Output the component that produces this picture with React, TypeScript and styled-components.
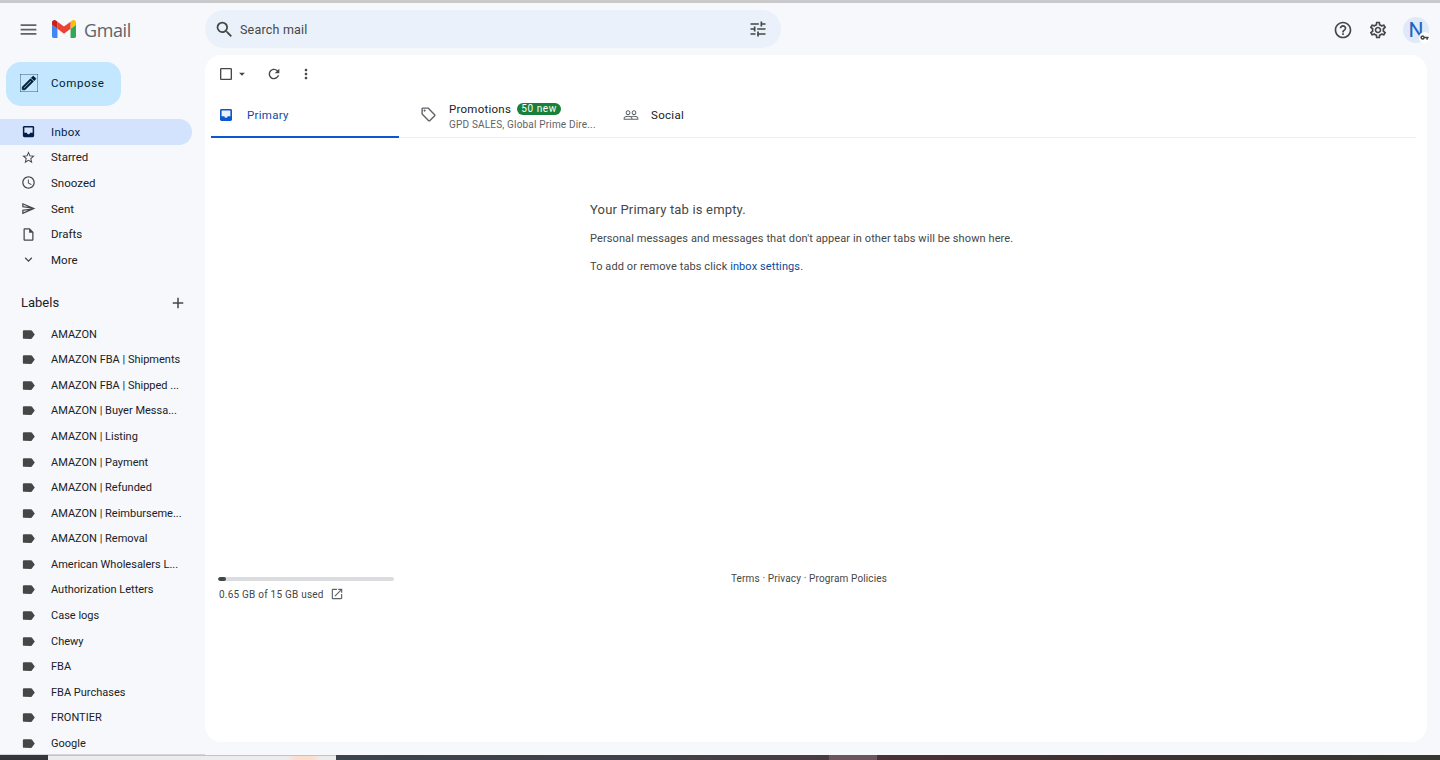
import React from "react";
import styled, { createGlobalStyle } from "styled-components";
import {
  MdMenu, MdSearch, MdTune, MdHelpOutline, MdOutlineSettings, MdOutlineEdit, MdOutlineStarBorder,
  MdAccessTime, MdOutlineSend, MdOutlineInsertDriveFile, MdExpandMore, MdLabel, MdAdd,
  MdCheckBoxOutlineBlank, MdArrowDropDown, MdRefresh, MdMoreVert, MdOutlineLocalOffer,
  MdPeopleOutline, MdOpenInNew, MdVpnKey,
} from "react-icons/md";

const Global = createGlobalStyle`
  html, body { margin: 0; height: 100%; overflow: hidden; }
  body { font-family: Roboto, "Liberation Sans", sans-serif; background: #f6f8fc; color: #202124; }
  #root { height: 100%; }
  * { box-sizing: border-box; }
`;

const Page = styled.div`
  height: 760px;
  display: flex;
  flex-direction: column;
  background: #f6f8fc;
`;
const TopEdge = styled.div`
  height: 3px;
  flex: none;
  background: #c9c9cb;
`;
const Shell = styled.div`
  flex: 1;
  min-height: 0;
  display: grid;
  grid-template-columns: 205px 1fr;
  overflow: hidden;
`;
const Taskbar = styled.div`
  height: 5px;
  flex: none;
  display: grid;
  grid-template-columns: 48px 288px 493px 48px 1fr;
`;
const TaskSegment = styled.div<{ $bg: string; $edge?: boolean }>`
  background: ${(p) => p.$bg};
  border-top: ${(p) => (p.$edge ? "1px solid #c4c4c4" : "none")};
`;

const Sidebar = styled.aside`
  display: flex;
  flex-direction: column;
  min-height: 0;
  overflow: hidden;
  border-bottom: 1px solid #d4d6da;
`;
const Brand = styled.div`
  height: 52px;
  flex: none;
  display: flex;
  align-items: center;
  padding-left: 18px;
  color: #5f6368;
`;
const BrandMark = styled.svg`
  width: 24px;
  height: 18px;
  margin-left: 13px;
`;
const BrandName = styled.span`
  font-family: "Open Sans", sans-serif;
  font-size: 18px;
  margin: 2px 0 0 8px;
  letter-spacing: -0.4px;
  color: #5f6368;
`;
const Compose = styled.div`
  width: 115px;
  height: 44px;
  flex: none;
  margin: 7px 0 13px 6px;
  border-radius: 15px;
  background: #c2e7ff;
  display: flex;
  align-items: center;
  padding: 0 0 2px 14px;
  gap: 13px;
  font-size: 11.5px;
  letter-spacing: 0.6px;
  color: #001d35;
  font-weight: 400;
  svg { stroke: currentColor; stroke-width: 0.9; }
`;
const NavRow = styled.div<{ $active?: boolean }>`
  height: 25.6px;
  flex: none;
  width: 192px;
  display: flex;
  align-items: center;
  padding-left: 21px;
  gap: 15px;
  font-size: 11.5px;
  white-space: nowrap;
  border-radius: 0 13px 13px 0;
  color: ${(p) => (p.$active ? "#041e49" : "#202124")};
  background: ${(p) => (p.$active ? "#d3e3fd" : "transparent")};
  font-weight: 400;
  letter-spacing: ${(p) => (p.$active ? "0.3px" : "0.02px")};
  svg { flex: none; color: ${(p) => (p.$active ? "#041e49" : "#444746")}; }
`;
const LabelRow = styled(NavRow)`
  font-size: 11px;
  letter-spacing: 0;
`;
const LabelHead = styled.div`
  height: 26px;
  flex: none;
  margin: 17px 0 5.7px;
  width: 192px;
  padding: 0 5px 0 21px;
  display: flex;
  align-items: center;
  justify-content: space-between;
  font-size: 13px;
  font-weight: 400;
  color: #202124;
  svg { color: #444746; }
`;
const Main = styled.main`
  display: flex;
  flex-direction: column;
  min-width: 0;
`;
const Header = styled.header`
  height: 52px;
  flex: none;
  display: flex;
  align-items: center;
`;
const Search = styled.div`
  width: 576px;
  height: 38px;
  border-radius: 19px;
  background: #eaf1fb;
  display: flex;
  align-items: center;
  padding: 0 13px 0 9px;
  font-size: 12.5px;
  color: #444746;
  gap: 5px;
  svg { color: #444746; flex: none; }
`;
const SearchText = styled.span`
  flex: 1;
  letter-spacing: 0.2px;
`;
const HeaderTools = styled.div`
  margin-left: auto;
  margin-right: 11px;
  padding-top: 2px;
  display: flex;
  align-items: center;
  gap: 15px;
  color: #444746;
`;
const Avatar = styled.div`
  position: relative;
  width: 26px;
  height: 26px;
  border-radius: 50%;
  background: #dfe9f8;
  display: flex;
  align-items: center;
  justify-content: center;
  font-size: 21px;
  color: #1a66c2;
`;
const KeyBadge = styled.span`
  position: absolute;
  right: -1px;
  bottom: 0;
  width: 11px;
  height: 11px;
  border-radius: 50%;
  background: #fff;
  display: flex;
  align-items: center;
  justify-content: center;
  color: #444;
`;
const Panel = styled.section`
  width: 1222px;
  height: 687px;
  background: #fff;
  border-radius: 16px;
  display: flex;
  flex-direction: column;
  padding: 0 11px 0 6px;
`;
const Toolbar = styled.div`
  height: 38px;
  flex: none;
  display: flex;
  align-items: center;
  padding-left: 7px;
  color: #444746;
`;
const CaretSlot = styled.span`
  display: flex;
  margin-left: 1px;
`;
const ToolGap = styled.span<{ $w: number }>`
  width: ${(p) => p.$w}px;
`;
const Tabs = styled.div`
  height: 45px;
  flex: none;
  display: flex;
  border-bottom: 1px solid #eceff1;
`;
const Tab = styled.div<{ $active?: boolean; $w: number; $pad: number; $gap: number }>`
  width: ${(p) => p.$w}px;
  flex: none;
  display: flex;
  align-items: center;
  gap: ${(p) => p.$gap}px;
  padding-left: ${(p) => p.$pad}px;
  font-size: 11.5px;
  letter-spacing: 0.3px;
  margin-bottom: -1px;
  color: ${(p) => (p.$active ? "#0b4aa8" : "#202124")};
  border-bottom: 2px solid ${(p) => (p.$active ? "#0b57d0" : "transparent")};
  svg { color: ${(p) => (p.$active ? "#0b57d0" : "#5f6368")}; flex: none; }
`;
const TabStack = styled.div`
  display: flex;
  flex-direction: column;
  gap: 3px;
  padding-top: 3px;
`;
const TabTitle = styled.div`
  display: flex;
  align-items: center;
  gap: 6px;
  letter-spacing: 0.25px;
`;
const Badge = styled.span`
  background: #188038;
  color: #fff;
  border-radius: 7px;
  height: 12px;
  line-height: 12px;
  padding: 0 4px;
  font-size: 10px;
  font-weight: 400;
  letter-spacing: 0.6px;
`;
const TabSub = styled.div`
  font-size: 10px;
  letter-spacing: 0.18px;
  color: #5f6368;
  white-space: nowrap;
`;
const Empty = styled.div`
  height: 436px;
  flex: none;
  padding: 64px 0 0 379px;
  color: #444746;
`;
const EmptyTitle = styled.div`
  font-size: 13px;
  letter-spacing: 0.17px;
  line-height: 16px;
  margin-bottom: 14px;
`;
const EmptyLine = styled.div`
  font-size: 11px;
  letter-spacing: 0.1px;
  line-height: 14px;
  margin-bottom: 14px;
  color: #444746;
`;
const InlineLink = styled.span`
  color: #0b4a9e;
`;
const Foot = styled.footer`
  display: grid;
  grid-template-columns: 513px auto;
  padding-left: 7px;
  font-size: 10px;
  letter-spacing: 0.22px;
  color: #444746;
`;
const StorageBar = styled.div`
  width: 176px;
  height: 4px;
  border-radius: 2px;
  background: #dadce0;
  margin: 3px 0 6px;
  overflow: hidden;
`;
const StorageFill = styled.div`
  height: 100%;
  border-radius: 2px;
  background: #444746;
`;
const StorageText = styled.div`
  display: flex;
  align-items: center;
  gap: 6px;
  padding-left: 1px;
  svg { color: #5f6368; }
`;
const Terms = styled.div`
  line-height: 10px;
  letter-spacing: 0.14px;
`;

function InboxGlyph({ size, color, inner }: { size: number; color: string; inner: string }) {
  return (
    <svg width={size} height={size} viewBox="0 0 24 24">
      <rect x="3" y="3" width="18" height="18" rx="2.2" fill={color} />
      <path d="M5.4 5.4h13.2v8.4h-4.2a2.4 2.4 0 0 1-4.8 0H5.4z" fill={inner} />
    </svg>
  );
}

const labels = [
  "AMAZON", "AMAZON FBA | Shipments", "AMAZON FBA | Shipped ...", "AMAZON | Buyer Messa...",
  "AMAZON | Listing", "AMAZON | Payment", "AMAZON | Refunded", "AMAZON | Reimburseme...",
  "AMAZON | Removal", "American Wholesalers L...", "Authorization Letters", "Case logs",
  "Chewy", "FBA", "FBA Purchases", "FRONTIER", "Google",
];

const nav = [
  { name: "Starred", icon: <MdOutlineStarBorder size={15} /> },
  { name: "Snoozed", icon: <MdAccessTime size={15} /> },
  { name: "Sent", icon: <MdOutlineSend size={15} /> },
  { name: "Drafts", icon: <MdOutlineInsertDriveFile size={15} /> },
  { name: "More", icon: <MdExpandMore size={15} /> },
];

export default function App() {
  return (
    <Page>
      <Global />
      <TopEdge />
      <Shell>
        <Sidebar>
          <Brand>
            <MdMenu size={21} />
            <BrandMark viewBox="52 42 88 66">
              <path fill="#4285f4" d="M58 108h14V74L52 59v43c0 3.32 2.69 6 6 6" />
              <path fill="#34a853" d="M120 108h14c3.32 0 6-2.69 6-6V59l-20 15" />
              <path fill="#fbbc04" d="M120 48v26l20-15v-8c0-7.42-8.47-11.65-14.4-7.2" />
              <path fill="#ea4335" d="M72 74V48l24 18 24-18v26L96 92" />
              <path fill="#c5221f" d="M52 51v8l20 15V48l-5.6-4.2c-5.94-4.45-14.4-.22-14.4 7.2" />
            </BrandMark>
            <BrandName>Gmail</BrandName>
          </Brand>
          <Compose>
            <MdOutlineEdit size={18} color="#001d35" />
            Compose
          </Compose>
          <NavRow $active>
            <InboxGlyph size={15} color="#041e49" inner="#d3e3fd" />
            Inbox
          </NavRow>
          {nav.map((n) => (
            <NavRow key={n.name}>
              {n.icon}
              {n.name}
            </NavRow>
          ))}
          <LabelHead>
            Labels
            <MdAdd size={18} />
          </LabelHead>
          {labels.map((l) => (
            <LabelRow key={l}>
              <MdLabel size={15} />
              {l}
            </LabelRow>
          ))}
        </Sidebar>
        <Main>
          <Header>
            <Search>
              <MdSearch size={21} />
              <SearchText>Search mail</SearchText>
              <MdTune size={20} />
            </Search>
            <HeaderTools>
              <MdHelpOutline size={20} />
              <MdOutlineSettings size={20} />
              <Avatar>
                N
                <KeyBadge>
                  <MdVpnKey size={9} />
                </KeyBadge>
              </Avatar>
            </HeaderTools>
          </Header>
          <Panel>
            <Toolbar>
              <MdCheckBoxOutlineBlank size={16} />
              <CaretSlot>
                <MdArrowDropDown size={14} />
              </CaretSlot>
              <ToolGap $w={17} />
              <MdRefresh size={16} />
              <ToolGap $w={16} />
              <MdMoreVert size={16} />
            </Toolbar>
            <Tabs>
              <Tab $active $w={188} $pad={7} $gap={13}>
                <InboxGlyph size={16} color="#0b57d0" inner="#eaf1fb" />
                Primary
              </Tab>
              <Tab $w={214} $pad={21} $gap={12}>
                <MdOutlineLocalOffer size={17} />
                <TabStack>
                  <TabTitle>
                    Promotions
                    <Badge>50 new</Badge>
                  </TabTitle>
                  <TabSub>GPD SALES, Global Prime Dire...</TabSub>
                </TabStack>
              </Tab>
              <Tab $w={120} $pad={10} $gap={12}>
                <MdPeopleOutline size={16} />
                Social
              </Tab>
            </Tabs>
            <Empty>
              <EmptyTitle>Your Primary tab is empty.</EmptyTitle>
              <EmptyLine>Personal messages and messages that don't appear in other tabs will be shown here.</EmptyLine>
              <EmptyLine>
                To add or remove tabs click <InlineLink>inbox settings</InlineLink>.
              </EmptyLine>
            </Empty>
            <Foot>
              <div>
                <StorageBar>
                  <StorageFill style={{ width: `${(0.65 / 15) * 100}%` }} />
                </StorageBar>
                <StorageText>
                  0.65 GB of 15 GB used
                  <MdOpenInNew size={14} />
                </StorageText>
              </div>
              <Terms>Terms · Privacy · Program Policies</Terms>
            </Foot>
          </Panel>
        </Main>
      </Shell>
      <Taskbar>
        <TaskSegment $bg="#33363b" />
        <TaskSegment $edge $bg="linear-gradient(90deg,#ececec 83%,#fbdccd 87%,#fbdccd 91%,#ececec 95%)" />
        <TaskSegment $bg="linear-gradient(90deg,#3b434c,#40404a 60%,#4a3a40)" />
        <TaskSegment $bg="#6a565c" />
        <TaskSegment $bg="linear-gradient(90deg,#4a3038,#3c3030 50%,#36382e)" />
      </Taskbar>
    </Page>
  );
}
